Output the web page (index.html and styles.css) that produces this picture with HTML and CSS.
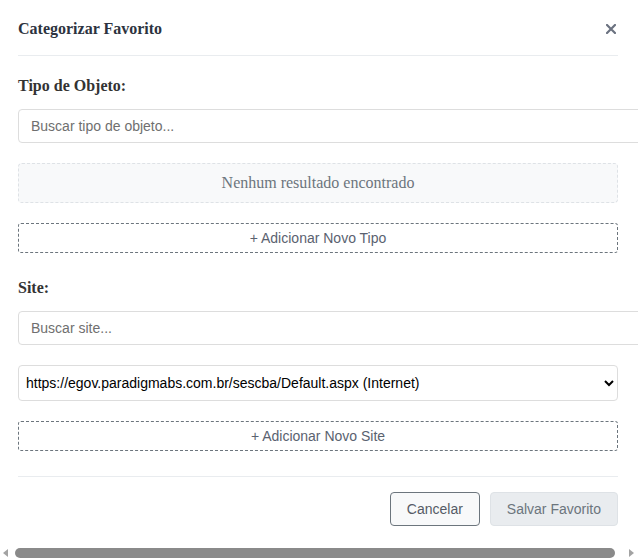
FILE: index.html
```html
<!DOCTYPE html>
<html lang="pt-BR">
<head>
<meta charset="utf-8">
<title>Categorizar Favorito</title>
<link rel="stylesheet" href="styles.css">
</head>
<body>
<div class="page">
  <div class="scroll-area">
    <div class="modal">
      <div class="modal-header">
        <h3 class="modal-title">Categorizar Favorito</h3>
        <button class="close-btn" type="button" aria-label="Fechar">
          <svg width="10" height="10" viewBox="0 0 10 10"><path d="M1 1L9 9M9 1L1 9" stroke="#6b7280" stroke-width="2.2" stroke-linecap="square"/></svg>
        </button>
      </div>
      <div class="modal-body">
        <div class="form-group">
          <label class="label">Tipo de Objeto:</label>
          <input class="search" type="text" placeholder="Buscar tipo de objeto...">
          <div class="empty">Nenhum resultado encontrado</div>
          <button class="add-btn" type="button">+ Adicionar Novo Tipo</button>
        </div>
        <div class="form-group">
          <label class="label">Site:</label>
          <input class="search" type="text" placeholder="Buscar site...">
          <select class="select">
            <option>https://egov.paradigmabs.com.br/sescba/Default.aspx (Internet)</option>
          </select>
          <button class="add-btn" type="button">+ Adicionar Novo Site</button>
        </div>
      </div>
      <div class="modal-footer">
        <button class="btn btn-cancel" type="button">Cancelar</button>
        <button class="btn btn-save" type="button" disabled>Salvar Favorito</button>
      </div>
    </div>
  </div>
  <div class="hscroll" aria-hidden="true">
    <span class="arrow arrow-left"></span>
    <span class="thumb"></span>
    <span class="arrow arrow-right"></span>
  </div>
</div>
</body>
</html>
```
FILE: styles.css
```css
html, body {
  margin: 0;
  padding: 0;
  background: #fff;
}
body {
  font-family: "Liberation Serif", "Times New Roman", serif;
  color: #333;
}
.page {
  width: 638px;
  height: 560px;
  display: flex;
  flex-direction: column;
  overflow: hidden;
}
.scroll-area {
  flex: 1;
  overflow: hidden;
}
.modal {
  width: 600px;
  padding: 1px 18px 0;
}
.modal-header {
  display: flex;
  align-items: center;
  justify-content: space-between;
  padding: 18px 0 17px;
  border-bottom: 1px solid #e9ecef;
}
.modal-title {
  margin: 0;
  font-size: 16px;
  line-height: 19px;
  font-weight: bold;
  color: #2d3340;
}
.close-btn {
  border: 0;
  background: none;
  padding: 0;
  margin-right: 1px;
  width: 12px;
  height: 12px;
  display: flex;
  align-items: center;
  justify-content: center;
  cursor: pointer;
}
.modal-body {
  padding-top: 20px;
}
.form-group {
  display: flex;
  flex-direction: column;
  align-items: flex-start;
  margin-bottom: 25px;
}
.label {
  font-size: 16px;
  line-height: 19px;
  font-weight: bold;
  color: #333;
  margin-bottom: 14px;
}
.search {
  width: 600px;
  padding: 8px 12px;
  border: 1px solid #dddddd;
  border-radius: 4px;
  font-family: "Liberation Sans", Arial, sans-serif;
  font-size: 14px;
  line-height: 16px;
  height: 16px;
  color: #333;
  outline: none;
  margin: 0 0 20px;
  flex-shrink: 0;
}
.search::placeholder {
  color: #6f6f6f;
}
.empty {
  box-sizing: border-box;
  width: 600px;
  height: 40px;
  display: flex;
  align-items: center;
  justify-content: center;
  background: #f8f9fa;
  border: 1px dashed #dee2e6;
  border-radius: 4px;
  font-size: 16px;
  color: #6c757d;
  margin-bottom: 20px;
}
.add-btn {
  box-sizing: border-box;
  width: 600px;
  height: 30px;
  padding: 0;
  background: #fff;
  border: 1px dashed #6c757d;
  border-radius: 3px;
  font-family: "Liberation Sans", Arial, sans-serif;
  font-size: 14px;
  color: #5a6270;
  cursor: pointer;
}
.select {
  box-sizing: border-box;
  width: 600px;
  height: 36px;
  padding: 0 8px 0 3px;
  border: 1px solid #dddddd;
  border-radius: 4px;
  font-family: "Liberation Sans", Arial, sans-serif;
  font-size: 14px;
  color: #000;
  background: #fff;
  margin-bottom: 20px;
}
.modal-footer {
  display: flex;
  justify-content: flex-end;
  gap: 10px;
  border-top: 1px solid #e9ecef;
  padding-top: 15px;
}
.btn {
  height: 34px;
  padding: 0 16px;
  border-radius: 4px;
  font-family: "Liberation Sans", Arial, sans-serif;
  font-size: 14px;
  cursor: pointer;
}
.btn-cancel {
  background: #f8f9fa;
  border: 1px solid #6c757d;
  color: #555b66;
}
.btn-save {
  background: #e9ecef;
  border: 1px solid #dee2e6;
  color: #6c757d;
}
.hscroll {
  flex: 0 0 15px;
  display: flex;
  align-items: center;
  background: #fff;
  padding: 0 4px 0 3px;
}
.arrow {
  width: 0;
  height: 0;
  border-top: 4px solid transparent;
  border-bottom: 4px solid transparent;
}
.arrow-left {
  border-right: 5px solid #a3a3a3;
}
.arrow-right {
  border-left: 5px solid #a3a3a3;
}
.thumb {
  flex: 1;
  height: 10px;
  margin: 0 14px 0 7px;
  border-radius: 5px;
  background: #8a8a8a;
}
```
